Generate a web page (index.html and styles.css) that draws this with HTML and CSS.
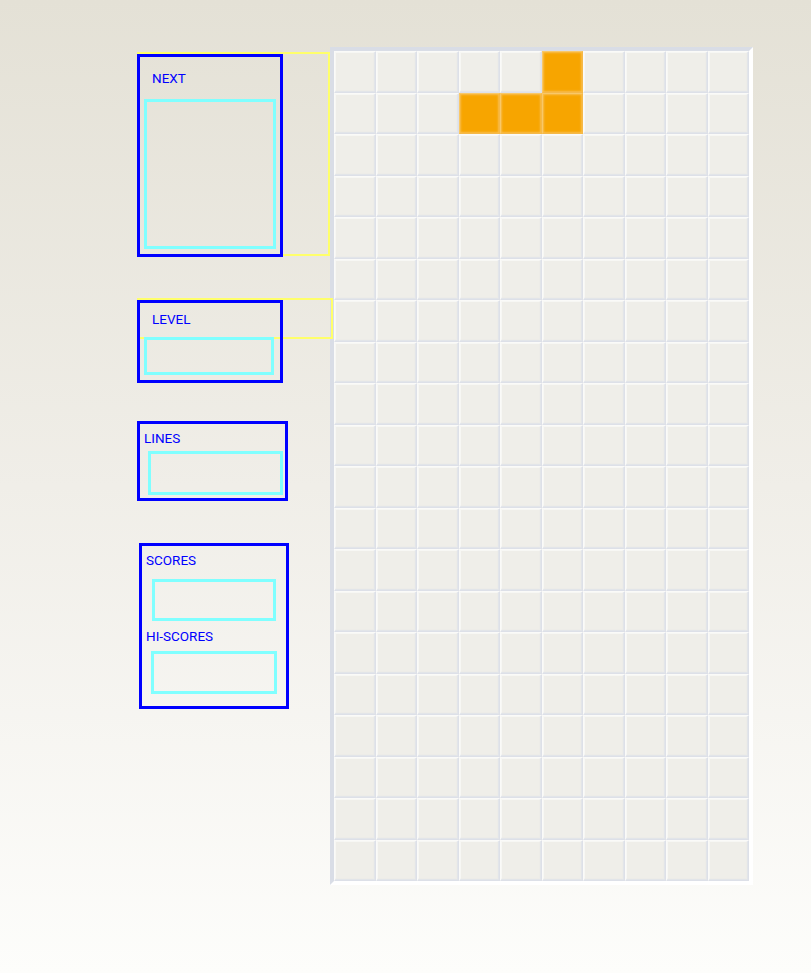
FILE: index.html
```html
<!DOCTYPE html>
<html>
<head>
<meta charset="utf-8">
<title>Tetris</title>
<link rel="stylesheet" href="styles.css">
</head>
<body>
<div class="game">
  <div class="side">
    <div class="slot slot-next">
      <div class="panel panel-next">
        <div class="label">NEXT</div>
        <div class="screen screen-next"></div>
      </div>
    </div>
    <div class="slot slot-level">
      <div class="panel panel-level">
        <div class="label">LEVEL</div>
        <div class="screen screen-level"></div>
      </div>
    </div>
    <div class="panel panel-lines">
      <div class="label">LINES</div>
      <div class="screen screen-lines"></div>
    </div>
    <div class="panel panel-scores">
      <div class="label">SCORES</div>
      <div class="screen screen-score"></div>
      <div class="label label-hi">HI-SCORES</div>
      <div class="screen screen-hi"></div>
    </div>
  </div>
  <div class="board" id="board"></div>
</div>
<script>
  var board = document.getElementById('board');
  var filled = {'0-5':1,'1-3':1,'1-4':1,'1-5':1};
  for (var r = 0; r < 20; r++) {
    for (var c = 0; c < 10; c++) {
      var d = document.createElement('div');
      d.className = 'cell' + (filled[r + '-' + c] ? ' cell-on' : '');
      board.appendChild(d);
    }
  }
</script>
</body>
</html>
```

FILE: styles.css
```css
html, body {
  margin: 0;
  padding: 0;
}
body {
  height: 973px;
  background: linear-gradient(to bottom, #e4e1d6 0%, #f0eee8 50%, #fdfdfb 100%);
  font-family: Roboto, "Liberation Sans", sans-serif;
  font-size: 13.5px;
  color: #0000ff;
  overflow: hidden;
}
.game {
  display: flex;
  align-items: flex-start;
  padding-top: 47px;
  padding-left: 137px;
}
.side {
  width: 193px;
  display: flex;
  flex-direction: column;
  align-items: flex-start;
  position: relative;
  z-index: 1;
}
.slot {
  box-sizing: border-box;
  border: 2px solid #ffff6a;
}
.slot-next {
  width: 193px;
  height: 204px;
  margin-top: 5px;
}
.slot-level {
  width: 196px;
  height: 41px;
  margin-top: 42px;
}
.panel {
  box-sizing: border-box;
  border: 3px solid #0000ff;
  flex-shrink: 0;
}
.slot .panel {
  margin-left: -2px;
}
.label {
  line-height: 16px;
  height: 16px;
  white-space: nowrap;
}
.screen {
  box-sizing: border-box;
  border: 3px solid #80ffff;
}
/* NEXT */
.panel-next {
  width: 146px;
  height: 203px;
  padding: 13px 4px 0;
}
.panel-next .label {
  padding-left: 8px;
}
.screen-next {
  width: 132px;
  height: 150px;
  margin-top: 13px;
}
/* LEVEL */
.panel-level {
  width: 146px;
  height: 83px;
  padding: 8px 4px 0;
}
.panel-level .label {
  padding-left: 8px;
}
.screen-level {
  width: 130px;
  height: 38px;
  margin-top: 10px;
}
/* LINES */
.panel-lines {
  width: 151px;
  height: 80px;
  margin-top: 82px;
  padding: 6px 4px 0;
}
.screen-lines {
  width: 135px;
  height: 44px;
  margin-top: 5px;
  margin-left: 4px;
}
/* SCORES */
.panel-scores {
  width: 150px;
  height: 166px;
  margin-top: 42px;
  margin-left: 2px;
  padding: 6px 4px 0;
}
.screen-score {
  width: 124px;
  height: 42px;
  margin-top: 11px;
  margin-left: 6px;
}
.label-hi {
  margin-top: 7px;
}
.screen-hi {
  width: 126px;
  height: 43px;
  margin-top: 7px;
  margin-left: 5px;
}
/* BOARD */
.board {
  flex-shrink: 0;
  width: 415px;
  height: 830px;
  border-style: solid;
  border-width: 4px;
  border-color: #d9dde6 #ffffff #ffffff #d9dde6;
  display: grid;
  grid-template-columns: repeat(10, 1fr);
  grid-template-rows: repeat(20, 1fr);
}
.cell {
  box-sizing: border-box;
  background: #efeee9;
  border-style: solid;
  border-width: 1px;
  border-color: #fafaf8 #dde0e8 #dde0e8 #fafaf8;
  box-shadow: inset -1px -1px 1px rgba(220, 223, 232, 0.7), inset 1px 1px 0 rgba(255, 255, 255, 0.5);
}
.cell-on {
  background: #f7a500;
  border-color: #f9c868 #f5b848 #f5b848 #f9c868;
  box-shadow: inset 0 0 2px 1px rgba(250, 200, 110, 0.7);
}
```
